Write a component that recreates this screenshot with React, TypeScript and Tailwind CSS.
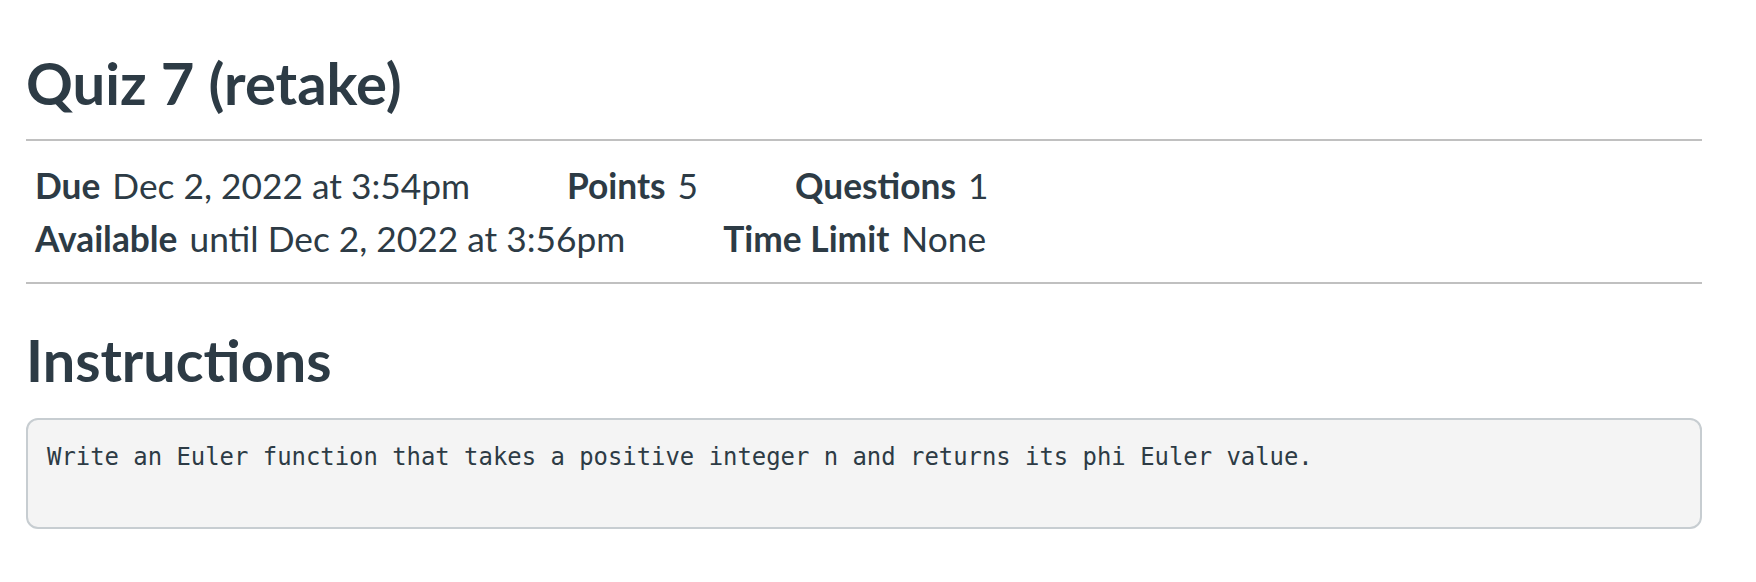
const Detail = ({ label, value }: { label: string; value: string }) => (
  <div className="flex items-baseline">
    <span className="font-bold">{label}</span>
    <span className="ml-[12px]">{value}</span>
  </div>
)

const App = () => {
  return (
    <div className="min-h-screen bg-white pl-[26px] pr-[54px] pt-[48px] text-[#2d3b45] font-['Lato',sans-serif]">
      <h1 className="text-[58px] leading-[70px] font-bold">Quiz 7 (retake)</h1>
      <div className="mt-[21px] h-[2px] bg-[#c0c0c0]"></div>
      <div className="pl-[9px] pt-[18px] pb-[17px] text-[35.3px] leading-[53px]">
        <div className="flex gap-[97px]">
          <Detail label="Due" value="Dec 2, 2022 at 3:54pm" />
          <Detail label="Points" value="5" />
          <Detail label="Questions" value="1" />
        </div>
        <div className="flex gap-[98px]">
          <Detail label="Available" value="until Dec 2, 2022 at 3:56pm" />
          <Detail label="Time Limit" value="None" />
        </div>
      </div>
      <div className="h-[2px] bg-[#c0c0c0]"></div>
      <h2 className="mt-[42px] text-[57.6px] leading-[68px] font-bold">Instructions</h2>
      <div className="mt-[24px] h-[111px] rounded-[12px] border-2 border-[#c7cdd1] bg-[#f4f4f4] px-[19px] pt-[23px]">
        <p className="font-['DejaVu_Sans_Mono',monospace] text-[23.9px] leading-[28px]">
          Write an Euler function that takes a positive integer n and returns its phi Euler value.
        </p>
      </div>
    </div>
  )
}

export default App
